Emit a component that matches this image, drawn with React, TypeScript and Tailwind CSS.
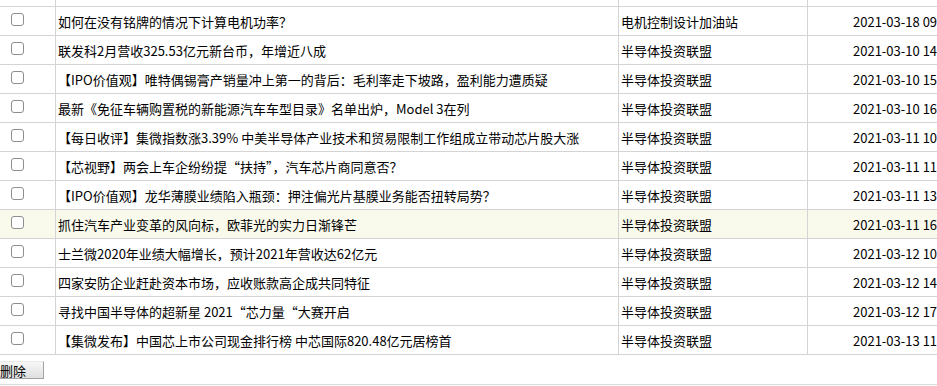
import React from 'react';

interface Article {
  title: string;
  source: string;
  time: string;
}

const articles: Article[] = [
  { title: '如何在没有铭牌的情况下计算电机功率？', source: '电机控制设计加油站', time: '2021-03-18 09:12' },
  { title: '联发科2月营收325.53亿元新台币，年增近八成', source: '半导体投资联盟', time: '2021-03-10 14:20' },
  { title: '【IPO价值观】唯特偶锡膏产销量冲上第一的背后：毛利率走下坡路，盈利能力遭质疑', source: '半导体投资联盟', time: '2021-03-10 15:05' },
  { title: '最新《免征车辆购置税的新能源汽车车型目录》名单出炉，Model 3在列', source: '半导体投资联盟', time: '2021-03-10 16:41' },
  { title: '【每日收评】集微指数涨3.39% 中美半导体产业技术和贸易限制工作组成立带动芯片股大涨', source: '半导体投资联盟', time: '2021-03-11 10:02' },
  { title: '【芯视野】两会上车企纷纷提“扶持”，汽车芯片商同意否？', source: '半导体投资联盟', time: '2021-03-11 11:18' },
  { title: '【IPO价值观】龙华薄膜业绩陷入瓶颈：押注偏光片基膜业务能否扭转局势？', source: '半导体投资联盟', time: '2021-03-11 13:47' },
  { title: '抓住汽车产业变革的风向标，欧菲光的实力日渐锋芒', source: '半导体投资联盟', time: '2021-03-11 16:30' },
  { title: '士兰微2020年业绩大幅增长，预计2021年营收达62亿元', source: '半导体投资联盟', time: '2021-03-12 10:11' },
  { title: '四家安防企业赶赴资本市场，应收账款高企成共同特征', source: '半导体投资联盟', time: '2021-03-12 14:26' },
  { title: '寻找中国半导体的超新星 2021“芯力量“大赛开启', source: '半导体投资联盟', time: '2021-03-12 17:53' },
  { title: '【集微发布】中国芯上市公司现金排行榜 中芯国际820.48亿元居榜首', source: '半导体投资联盟', time: '2021-03-13 11:09' },
];

const HOVER_ROW = 7;

export default function App() {
  return (
    <div className="w-[937px] h-[386px] overflow-hidden bg-white text-black text-[13px] leading-none font-['Noto_Sans_CJK_SC','Noto_Sans',sans-serif]">
      <div className="w-[1100px]">
        {/* tail of the previous row */}
        <div className="grid grid-cols-[56px_563px_189px_1fr] h-[7px] border-b border-[#d4d4d4]">
          <div className="border-r border-[#d4d4d4]" />
          <div className="border-r border-[#d4d4d4]" />
          <div className="border-r border-[#d4d4d4]" />
          <div />
        </div>

        {articles.map((a, i) => (
          <div
            key={i}
            className={`grid grid-cols-[56px_563px_189px_1fr] h-[29px] border-b border-[#d4d4d4] ${
              i === HOVER_ROW ? 'bg-[#fafaec]' : 'bg-white'
            }`}
          >
            <div className="border-r border-[#d4d4d4] flex items-start pt-[6px] pl-[11px]">
              <input
                type="checkbox"
                className="appearance-none m-0 w-[13px] h-[13px] rounded-[3px] border border-[#8e8e8e] bg-white checked:bg-[#3b82f6]"
              />
            </div>
            <div className="border-r border-[#d4d4d4] flex items-center pl-[2px] whitespace-nowrap overflow-hidden">
              {a.title}
            </div>
            <div className="border-r border-[#d4d4d4] flex items-center pl-[2px] whitespace-nowrap">
              {a.source}
            </div>
            <div className="flex items-center pl-[45px] whitespace-nowrap">{a.time}</div>
          </div>
        ))}

        <div className="h-[30px] border-b border-[#dcdcdc] pt-[6px]">
          <button
            type="button"
            className="w-[44px] h-[18px] flex items-center pl-0 bg-gradient-to-b from-[#f7f7f7] to-[#e0e0e0] border-t border-t-[#e8e8e8] border-r border-b border-[#a3a3a3] text-[13px] leading-none"
          >
            删除
          </button>
        </div>
      </div>
    </div>
  );
}
